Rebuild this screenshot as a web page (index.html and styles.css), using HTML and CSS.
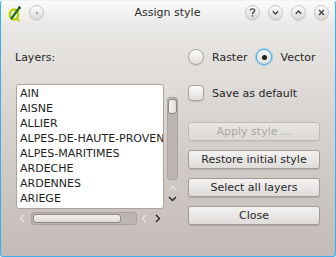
FILE: index.html
```html
<!DOCTYPE html>
<html lang="en">
<head>
<meta charset="UTF-8">
<title>Assign style</title>
<link rel="stylesheet" href="styles.css">
</head>
<body>
<div class="window">
  <div class="titlebar">
    <div class="tb-left">
      <svg class="logo" width="14" height="17" viewBox="0 0 14 17">
        <ellipse cx="6" cy="9.5" rx="4.2" ry="5" fill="none" stroke="#b9d300" stroke-width="2.4"/>
        <path d="M8.5 13 L11 16" stroke="#b9d300" stroke-width="2.4"/>
        <path d="M3 14 L12 2" stroke="#1e6e1e" stroke-width="2.2"/>
        <path d="M11 1 L13 3 L12 4 L10 2 Z" fill="#0d4d0d"/>
      </svg>
      <span class="tb-btn"><i class="dot"></i></span>
    </div>
    <div class="title">Assign style</div>
    <div class="tb-right">
      <span class="tb-btn">
        <svg width="15" height="15" viewBox="0 0 15 15"><path d="M5.3 5.6 C5.3 3.3 9.7 3.3 9.7 5.5 C9.7 7.2 7.5 7.1 7.5 9" fill="none" stroke="#444" stroke-width="1.3"/><rect x="6.8" y="10.2" width="1.4" height="1.4" fill="#444"/></svg>
      </span>
      <span class="tb-btn">
        <svg width="15" height="15" viewBox="0 0 15 15"><path d="M4.8 6.3 L7.5 9 L10.2 6.3" fill="none" stroke="#444" stroke-width="1.4"/></svg>
      </span>
      <span class="tb-btn">
        <svg width="15" height="15" viewBox="0 0 15 15"><path d="M4.8 8.7 L7.5 6 L10.2 8.7" fill="none" stroke="#444" stroke-width="1.4"/></svg>
      </span>
      <span class="tb-btn">
        <svg width="15" height="15" viewBox="0 0 15 15"><path d="M5 5 L10 10 M10 5 L5 10" fill="none" stroke="#444" stroke-width="1.4"/></svg>
      </span>
    </div>
  </div>

  <div class="content">
    <div class="layers">
      <div class="label">Layers:</div>
      <div class="list-area">
        <ul class="list">
          <li>AIN</li>
          <li>AISNE</li>
          <li>ALLIER</li>
          <li>ALPES-DE-HAUTE-PROVENCE</li>
          <li>ALPES-MARITIMES</li>
          <li>ARDECHE</li>
          <li>ARDENNES</li>
          <li>ARIEGE</li>
        </ul>
        <div class="vscroll">
          <svg class="arrow" width="9" height="6" viewBox="0 0 9 6"><path d="M1 5 L4.5 1.5 L8 5" fill="none" stroke="#e6e3e1" stroke-width="1.3"/></svg>
          <div class="vtrough"><div class="vhandle"></div></div>
          <svg class="arrow" width="9" height="6" viewBox="0 0 9 6"><path d="M1 5 L4.5 1.5 L8 5" fill="none" stroke="#e6e3e1" stroke-width="1.3"/></svg>
          <svg class="arrow down" width="9" height="6" viewBox="0 0 9 6"><path d="M1 1 L4.5 4.5 L8 1" fill="none" stroke="#222" stroke-width="1.3"/></svg>
        </div>
        <div class="hscroll">
          <svg class="harrow" width="6" height="9" viewBox="0 0 6 9"><path d="M5 1 L1.5 4.5 L5 8" fill="none" stroke="#e6e3e1" stroke-width="1.3"/></svg>
          <div class="htrough"><div class="hhandle"></div></div>
          <svg class="harrow" width="6" height="9" viewBox="0 0 6 9"><path d="M5 1 L1.5 4.5 L5 8" fill="none" stroke="#e6e3e1" stroke-width="1.3"/></svg>
          <svg class="harrow next" width="6" height="9" viewBox="0 0 6 9"><path d="M1 1 L4.5 4.5 L1 8" fill="none" stroke="#222" stroke-width="1.3"/></svg>
        </div>
      </div>
    </div>

    <div class="controls">
      <div class="radios">
        <label class="opt"><span class="radio"></span>Raster</label>
        <label class="opt"><span class="radio checked"></span>Vector</label>
      </div>
      <label class="opt check-row"><span class="check"></span>Save as default</label>
      <button class="btn" disabled>Apply style ...</button>
      <button class="btn">Restore initial style</button>
      <button class="btn">Select all layers</button>
      <button class="btn">Close</button>
    </div>
  </div>
</div>
</body>
</html>
```

FILE: styles.css
```css
/*--page------------------------------------------------------------------*/
html, body {
    margin: 0;
    padding: 0;
}
body {
    width: 336px;
    height: 257px;
    background: #ffffff;
    font-family: "DejaVu Sans", sans-serif;
    font-size: 11px;
    color: #272727;
}

.window {
    box-sizing: border-box;
    width: 336px;
    height: 257px;
    border: 1px solid #3daee9;
    border-top-color: #e9f4fb;
    border-radius: 4px 4px 3px 3px;
    background: linear-gradient(#fbfbfb 0px, #e9e7e5 26px, #d9d5d2 110px, #c3bbb7 100%);
    overflow: hidden;
}

/*--title bar-------------------------------------------------------------*/
.titlebar {
    height: 23px;
    display: grid;
    grid-template-columns: 1fr auto 1fr;
    align-items: center;
}
.title {
    font-size: 11px;
    color: #2b2b2b;
    margin-left: -1px;
}
.tb-left {
    display: flex;
    align-items: center;
    padding-left: 7px;
    gap: 7px;
}
.tb-right {
    display: flex;
    align-items: center;
    justify-content: flex-end;
    padding-right: 6px;
    gap: 8px;
}
.logo {
    margin-top: 1px;
}
.tb-btn {
    box-sizing: border-box;
    width: 15px;
    height: 15px;
    border-radius: 50%;
    border: 1px solid #c9c6c4;
    background: linear-gradient(#fdfdfd, #dddad8);
    box-shadow: 0 1px 1px rgba(0,0,0,0.12);
    display: flex;
    align-items: center;
    justify-content: center;
}
.tb-btn svg {
    flex: none;
}
.tb-btn .dot {
    width: 2px;
    height: 2px;
    border-radius: 50%;
    background: #888;
}

/*--content---------------------------------------------------------------*/
.content {
    display: flex;
}
.layers {
    padding-left: 14px;
    width: 165px;
}
.label {
    margin-top: 27px;
    line-height: 13px;
}
.list-area {
    margin-top: 20px;
    margin-left: 1px;
    display: grid;
    grid-template-columns: 148px 15px;
    column-gap: 1px;
}
.list {
    box-sizing: border-box;
    list-style: none;
    margin: 0;
    padding: 1px 0 0 3px;
    height: 125px;
    background: #ffffff;
    border: 1px solid #aaa49f;
    border-radius: 3px;
    overflow: hidden;
    white-space: nowrap;
    color: #1e1e1e;
}
.list li {
    line-height: 15px;
    height: 15px;
}

.vscroll {
    display: flex;
    flex-direction: column;
    align-items: center;
    padding-top: 5px;
}
.vtrough {
    box-sizing: border-box;
    width: 11px;
    height: 83px;
    margin-top: 2px;
    border: 1px solid #a9a29e;
    border-radius: 3px;
    background: #bdb5b1;
    padding: 1px 0 0 0;
}
.vhandle {
    box-sizing: border-box;
    width: 9px;
    height: 15px;
    border: 1px solid #8f8985;
    border-radius: 3px;
    background: linear-gradient(90deg, #f4f3f2, #dedbd9);
}
.vscroll .arrow {
    flex: none;
}
.vtrough + .arrow {
    margin-top: 5px;
}
.arrow.down {
    margin-top: 5px;
}

.hscroll {
    grid-column: 1 / 3;
    display: flex;
    align-items: center;
    height: 16px;
    margin-top: 1px;
    padding-left: 3px;
}
.htrough {
    box-sizing: border-box;
    width: 106px;
    height: 13px;
    margin-left: 6px;
    border: 1px solid #a9a29e;
    border-radius: 3px;
    background: #bdb5b1;
    padding: 1px 0 0 1px;
}
.hhandle {
    box-sizing: border-box;
    width: 88px;
    height: 9px;
    border: 1px solid #8f8985;
    border-radius: 3px;
    background: linear-gradient(#f4f3f2, #dedbd9);
}
.htrough + .harrow {
    margin-left: 4px;
}
.harrow.next {
    margin-left: 8px;
}

/*--controls--------------------------------------------------------------*/
.controls {
    margin-left: 8px;
    width: 132px;
    display: flex;
    flex-direction: column;
}
.radios {
    display: flex;
    margin-top: 25px;
    gap: 9px;
}
.opt {
    display: flex;
    align-items: center;
    height: 16px;
    gap: 8px;
    white-space: nowrap;
}
.radio {
    box-sizing: border-box;
    width: 16px;
    height: 16px;
    border-radius: 50%;
    border: 1px solid #a8a29e;
    background: linear-gradient(#fbfbfb, #e2dfdd);
    box-shadow: 0 1px 1px rgba(0,0,0,0.1);
    display: flex;
    align-items: center;
    justify-content: center;
}
.radio.checked {
    border: 1px solid #3daee9;
    box-shadow: 0 0 0 1px rgba(61,174,233,0.45);
}
.radio.checked::after {
    content: "";
    width: 5px;
    height: 5px;
    border-radius: 50%;
    background: #1f1f1f;
}
.check-row {
    margin-top: 20px;
}
.check {
    box-sizing: border-box;
    width: 16px;
    height: 16px;
    border-radius: 4px;
    border: 1px solid #a8a29e;
    background: linear-gradient(#fbfbfb, #e2dfdd);
    box-shadow: 0 1px 1px rgba(0,0,0,0.1);
}

.btn {
    box-sizing: border-box;
    width: 132px;
    height: 19px;
    margin-top: 9px;
    padding: 0;
    border: 1px solid #a39d99;
    border-radius: 3px;
    background: linear-gradient(#f4f3f2, #dedbd8);
    box-shadow: 0 1px 1px rgba(0,0,0,0.15);
    font-family: "DejaVu Sans", sans-serif;
    font-size: 11px;
    color: #272727;
    line-height: 16px;
}
.btn[disabled] {
    margin-top: 21px;
    color: #aaa6a2;
    border-color: #c0bab6;
    background: linear-gradient(#e8e6e4, #dbd8d5);
    box-shadow: 0 1px 1px rgba(0,0,0,0.06);
}
```
